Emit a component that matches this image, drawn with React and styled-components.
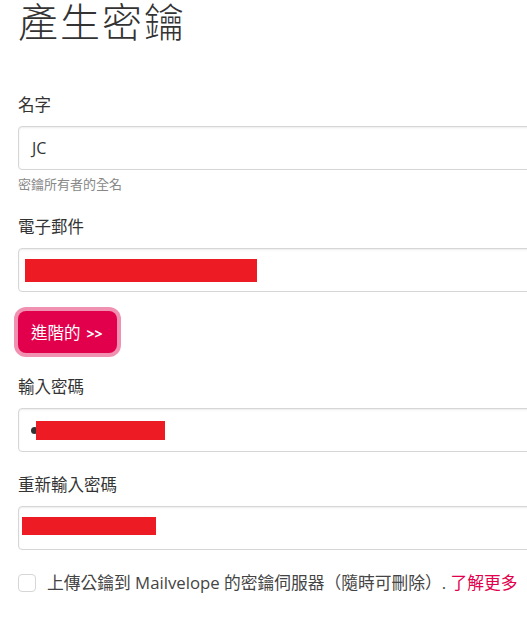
import React from "react";
import styled, { createGlobalStyle } from "styled-components";

const Global = createGlobalStyle`
  html, body { margin: 0; padding: 0; background: #fff; overflow: hidden; }
  body { font-family: "Open Sans", "Noto Sans CJK TC", sans-serif; color: #333; }
`;

const Page = styled.div`
  width: 640px;
  padding: 0 0 0 18px;
  display: flex;
  flex-direction: column;
`;

const Title = styled.h1`
  margin: 0;
  font-family: "Noto Sans CJK TC", sans-serif;
  font-weight: 300;
  font-size: 40px;
  line-height: 40px;
  color: #333;
  letter-spacing: 2px;
`;

const Field = styled.div`
  display: flex;
  flex-direction: column;
  margin-top: ${(p) => p.$top}px;
`;

const Label = styled.label`
  font-family: "Noto Sans CJK TC", sans-serif;
  font-size: 16.5px;
  line-height: 20px;
  color: #333;
  margin-bottom: 12px;
`;

const InputBox = styled.div`
  box-sizing: border-box;
  height: 44px;
  border: 1px solid #d6d6d6;
  border-radius: 4px;
  box-shadow: inset 0 1px 2px rgba(0, 0, 0, 0.08);
  display: flex;
  align-items: center;
  padding-left: ${(p) => p.$pad}px;
  font-size: 16px;
  color: #333;
`;

const Value = styled.span`
  font-family: "Open Sans", sans-serif;
  font-size: 16px;
`;

const Redact = styled.span`
  display: block;
  background: #ed1c24;
  width: ${(p) => p.$w}px;
  height: ${(p) => p.$h}px;
  margin-top: ${(p) => p.$dy || 0}px;
`;

const Dot = styled.span`
  display: block;
  width: 7px;
  height: 7px;
  border-radius: 50%;
  background: #333;
  margin-right: -2px;
`;

const Help = styled.div`
  font-family: "Noto Sans CJK TC", sans-serif;
  font-size: 13px;
  line-height: 18px;
  color: #888;
  margin-top: 5px;
`;

const Advanced = styled.button`
  align-self: flex-start;
  margin-top: 19px;
  height: 42px;
  width: 99px;
  padding: 0 0 0 13px;
  text-align: left;
  border: none;
  border-radius: 8px;
  background: #e2004c;
  color: #fff;
  font-family: "Open Sans", "Noto Sans CJK TC", sans-serif;
  font-size: 16.5px;
  box-shadow: 0 0 0 4px #f191b2;
  cursor: pointer;
`;

const Arrows = styled.span`
  font-weight: 700;
  font-size: 14px;
  margin-left: 6px;
`;

const CheckRow = styled.div`
  display: flex;
  align-items: center;
  gap: 11px;
  margin-top: 22px;
  font-size: 16.75px;
  line-height: 20px;
  color: #444;
`;

const Box = styled.span`
  box-sizing: border-box;
  width: 18px;
  height: 18px;
  border: 1px solid #d6d6d6;
  border-radius: 4px;
  flex: none;
`;

const Link = styled.a`
  color: #e2004c;
  text-decoration: none;
  font-family: "Noto Sans CJK TC", sans-serif;
`;

export default function App() {
  return (
    <>
      <Global />
      <Page>
        <Title>產生密鑰</Title>
        <Field $top={54}>
          <Label>名字</Label>
          <InputBox $pad={13}>
            <Value>JC</Value>
          </InputBox>
        </Field>
        <Help>密鑰所有者的全名</Help>
        <Field $top={23}>
          <Label>電子郵件</Label>
          <InputBox $pad={6}>
            <Redact $w={232} $h={23} />
          </InputBox>
        </Field>
        <Advanced>
          進階的<Arrows>&gt;&gt;</Arrows>
        </Advanced>
        <Field $top={23}>
          <Label>輸入密碼</Label>
          <InputBox $pad={12}>
            <Dot />
            <Redact $w={129} $h={19} />
          </InputBox>
        </Field>
        <Field $top={22}>
          <Label>重新輸入密碼</Label>
          <InputBox $pad={3}>
            <Redact $w={134} $h={18} $dy={-4} />
          </InputBox>
        </Field>
        <CheckRow>
          <Box />
          <span>
            上傳公鑰到 Mailvelope 的密鑰伺服器（隨時可刪除）. <Link href="#">了解更多</Link>
          </span>
        </CheckRow>
      </Page>
    </>
  );
}
